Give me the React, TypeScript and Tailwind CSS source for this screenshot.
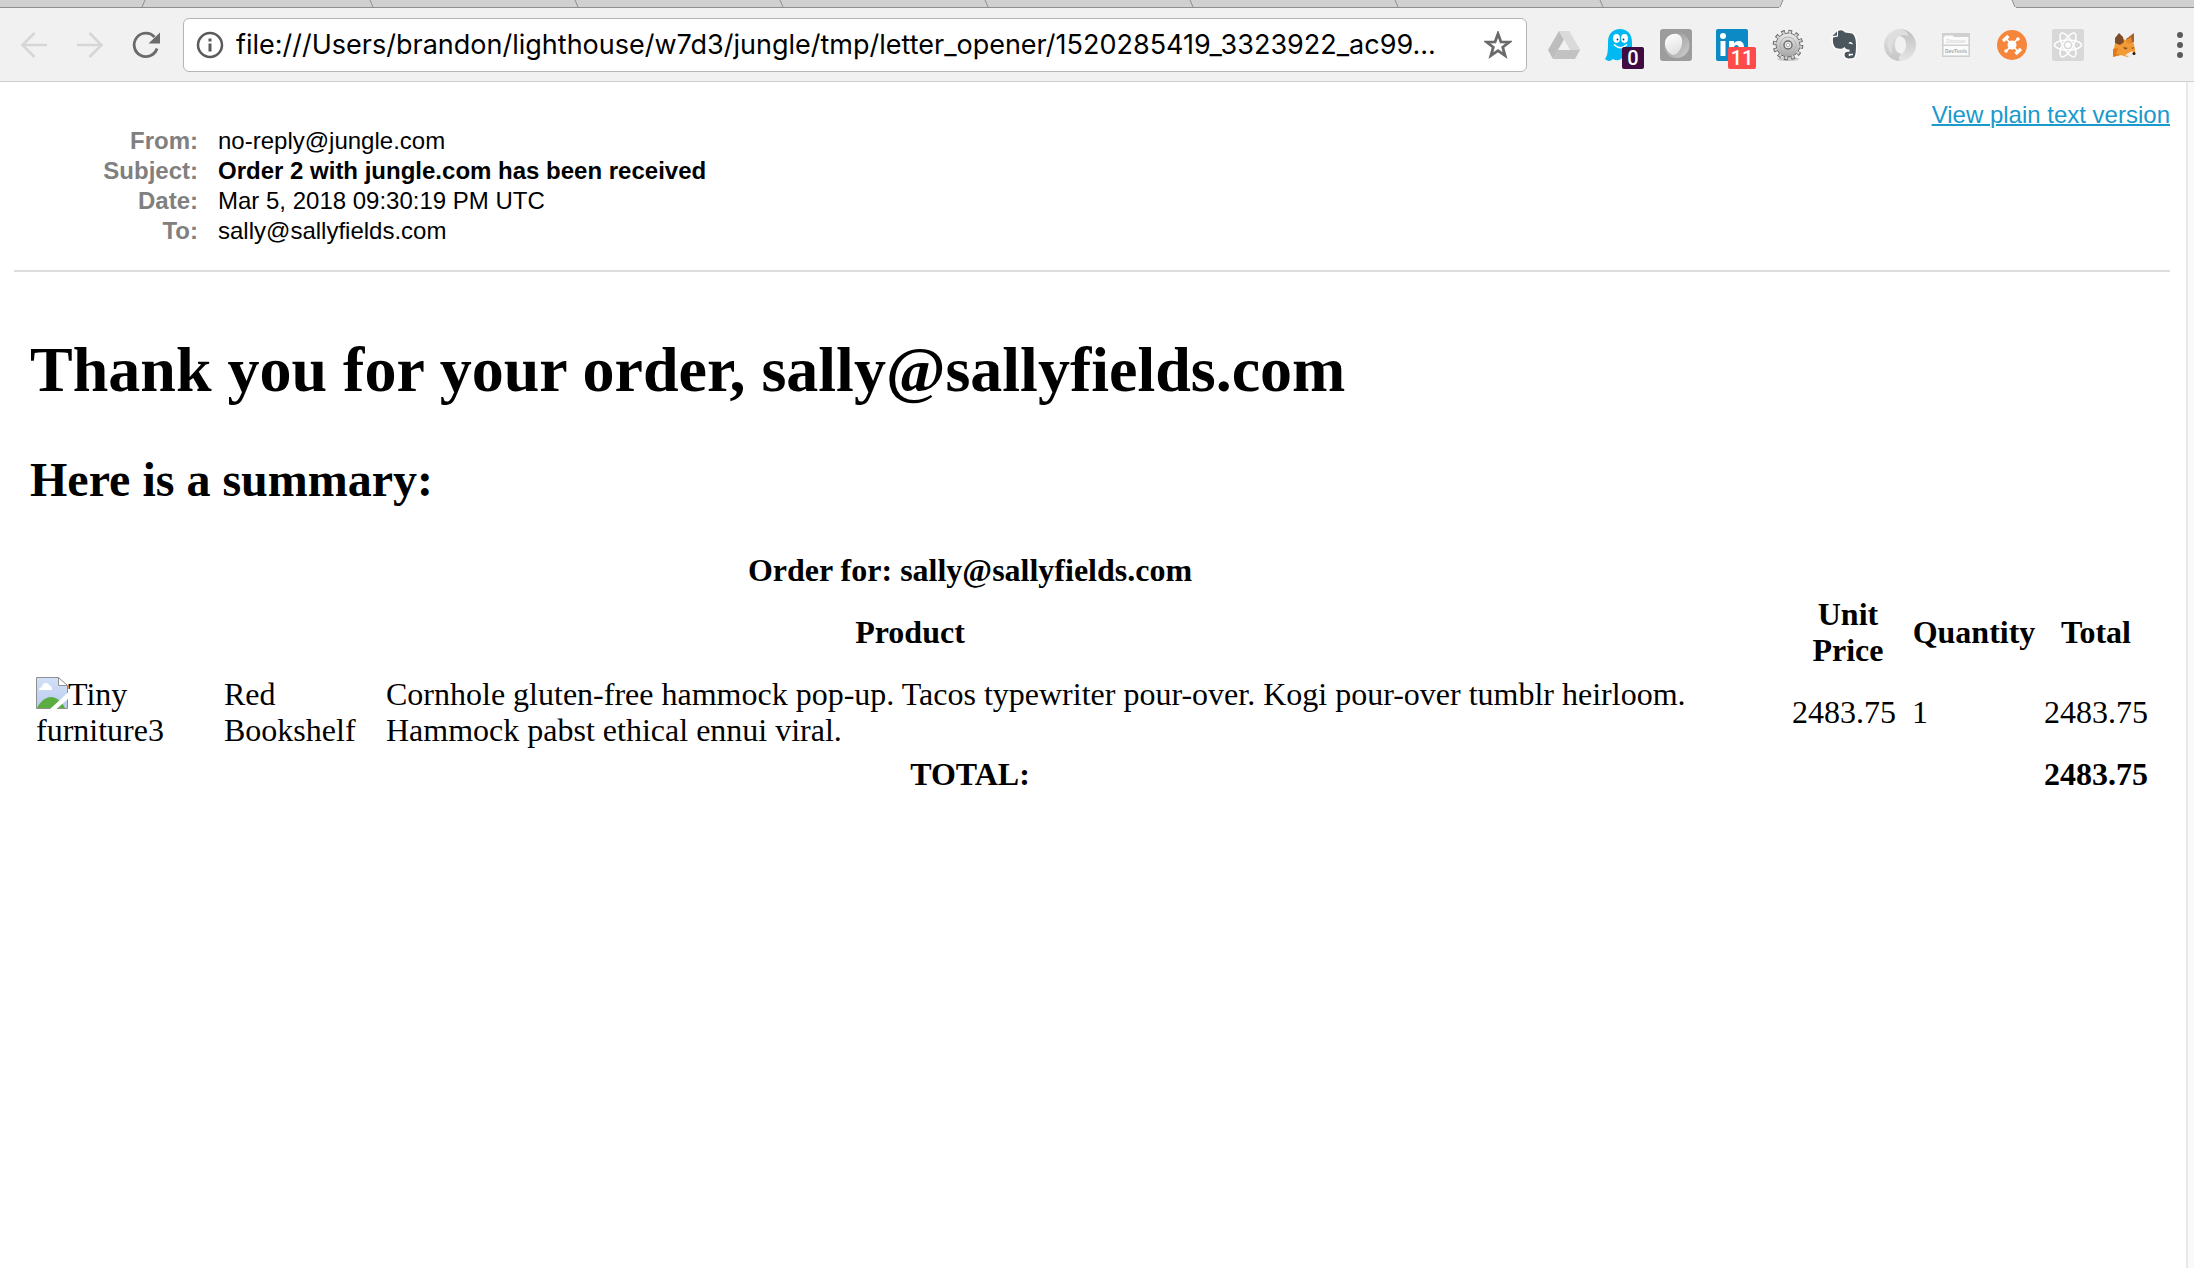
import React from "react";

type Tab = { id: string; width: string; active?: boolean; rise?: boolean };

const tabs: Tab[] = [
  { id: "a", width: "w-[146px]", rise: true },
  { id: "b", width: "w-[228px]" },
  { id: "c", width: "w-[205px]" },
  { id: "d", width: "w-[205px]" },
  { id: "e", width: "w-[205px]" },
  { id: "f", width: "w-[205px]" },
  { id: "g", width: "w-[205px]" },
  { id: "h", width: "w-[205px]" },
  { id: "i", width: "w-[180px]", rise: true },
  { id: "j", width: "w-[232px]", active: true },
];

function TabStrip() {
  return (
    <div className="flex h-2 bg-[#d0d0d0]">
      {tabs.map((t) => (
        <div
          key={t.id}
          className={`flex h-2 shrink-0 justify-end ${t.width} ${
            t.active ? "bg-[#f1f1f1]" : "border-b border-[#8f8f8f]"
          }`}
        >
          <svg width="5" height="8" viewBox="0 0 5 8" className="shrink-0">
            {t.active && <path d="M1 0L5 8V0z" fill="#d0d0d0" />}
            {t.rise && t.id === "i" && <path d="M4 0L0 8H5V0z" fill="#f1f1f1" />}
            <path d={t.rise ? "M4 0L1 7" : "M1 0L4 7"} stroke="#8f8f8f" fill="none" />
          </svg>
        </div>
      ))}
      <div className="h-2 grow border-b border-[#8f8f8f]" />
    </div>
  );
}

function Badge({ text, className }: { text: string; className: string }) {
  return (
    <span
      className={`absolute top-[18px] flex h-[22px] items-center justify-center rounded-[2px] font-[Roboto,sans-serif] text-[20px] font-medium text-white ${className}`}
    >
      {text}
    </span>
  );
}

function DriveIcon() {
  return (
    <svg viewBox="0 0 32 32" className="size-8">
      <path d="M11 2H21L32 21L26 21L16 9z" fill="#cfcfcf" />
      <path d="M11 2L0 21L5 30L16 11z" fill="#bdbdbd" />
      <path d="M11 2H21L32 21H22z" fill="#dadada" />
      <path d="M5 30H27L32 21H10z" fill="#c2c2c2" />
      <path d="M16 11L10 21H22z" fill="#f1f1f1" />
    </svg>
  );
}

function GhostIcon() {
  return (
    <svg viewBox="0 0 32 32" className="size-8">
      <path d="M4 13C4 5 9 0 16 0S28 5 28 13V27C25 31 22 31 19 28C16 32 12 32 9 30C6 33 3 32 1 30C4 26 4 21 4 13z" fill="#00b9f2" />
      <ellipse cx="12.500" cy="9.500" rx="3.400" ry="4.400" fill="#fff" />
      <ellipse cx="20.500" cy="9.500" rx="3.400" ry="4.400" fill="#fff" />
      <circle cx="13.500" cy="10.500" r="0.900" fill="#17344a" />
      <circle cx="19.500" cy="10.500" r="0.900" fill="#17344a" />
      <path d="M10 15.500Q16.500 22 23 15.500" stroke="#fff" strokeWidth="1.600" fill="none" />
    </svg>
  );
}

function LensIcon() {
  return (
    <svg viewBox="0 0 32 32" className="size-8">
      <defs>
        <linearGradient id="lens" x1="0" y1="0" x2="1" y2="1">
          <stop offset="0" stopColor="#8c8c8c" />
          <stop offset="1" stopColor="#cfcfcf" />
        </linearGradient>
        <linearGradient id="blob" x1="0" y1="0" x2="0.300" y2="1">
          <stop offset="0" stopColor="#ffffff" />
          <stop offset="1" stopColor="#e2e2e2" />
        </linearGradient>
      </defs>
      <rect width="32" height="32" rx="3" fill="#9c9c9c" />
      <circle cx="16.500" cy="16" r="13" fill="url(#lens)" />
      <path d="M5 13C6 7 12 4 17 5C21 6 23 10 22 15C21 21 17 26 13 26C8 25 4 18 5 13z" fill="url(#blob)" />
    </svg>
  );
}

function LinkedInIcon() {
  return (
    <svg viewBox="0 0 32 32" className="size-8">
      <rect width="32" height="32" rx="2" fill="#0b8ac6" />
      <circle cx="7" cy="7" r="3" fill="#fff" />
      <path d="M4.500 12H9.500V27H4.500zM13 12H18V14C21 10.500 28 11 28 18V27H23V19C23 15 18 15 18 19V27H13z" fill="#fff" />
    </svg>
  );
}

function GearIcon() {
  return (
    <svg viewBox="0 0 32 32" className="size-8">
      <defs>
        <linearGradient id="gear" x1="0" y1="0" x2="0" y2="1">
          <stop offset="0" stopColor="#ececec" />
          <stop offset="1" stopColor="#a4a4a4" />
        </linearGradient>
      </defs>
      <ellipse cx="16" cy="30" rx="11" ry="2" fill="#c9c9c9" />
      <circle cx="16" cy="16" r="13.300" fill="none" stroke="#666" strokeWidth="4" strokeDasharray="3.600 3.364" />
      <circle cx="16" cy="16" r="12" fill="url(#gear)" stroke="#6c6c6c" />
      <circle cx="16" cy="16" r="12.800" fill="none" stroke="#d2d2d2" strokeWidth="3" strokeDasharray="2.200 4.502" strokeDashoffset="-0.600" />
      <circle cx="16" cy="16" r="8" fill="none" stroke="#b4b4b4" />
      <circle cx="16" cy="16" r="4" fill="#f4f4f4" stroke="#6c6c6c" strokeWidth="1.500" />
      <circle cx="16" cy="16" r="1.800" fill="#fff" stroke="#aaa" />
    </svg>
  );
}

const elephant =
  "M10 2C13 0.500 15 1.500 17 3.500L24 4.500C27 6 28 11 28 16C28 22 27.500 27 26 28.500C23 30 16.500 30 16.500 26C16.500 23 19 22 21.500 23V20.500C19 20.500 17.500 20 16.500 18C14 20.500 11 20 8 19C5.500 17.500 4.500 13 5 8.500L10 7.500z";

function ElephantIcon() {
  return (
    <svg viewBox="0 0 32 32" className="size-8">
      <path d={elephant} fill="#fff" stroke="#fff" strokeWidth="2.600" strokeLinejoin="round" />
      <path d={elephant} fill="#4a565c" />
      <path d="M4.500 7L9 2.500V6.500z" fill="#4a565c" />
      <path d="M20.500 14.500C21 12 24.500 12.500 25 15.500C23.500 14.700 22 14.500 20.500 14.500z" fill="#fff" />
      <path d="M25 25.500H21.500V27" stroke="#fff" strokeWidth="1.500" fill="none" />
    </svg>
  );
}

function RingIcon() {
  return (
    <svg viewBox="0 0 32 32" className="size-8">
      <defs>
        <linearGradient id="ring-dark" x1="0" y1="0" x2="0" y2="1">
          <stop offset="0" stopColor="#bebebe" />
          <stop offset="1" stopColor="#e6e6e6" />
        </linearGradient>
        <linearGradient id="ring-light" x1="0" y1="0" x2="0" y2="1">
          <stop offset="0" stopColor="#e6e6e6" />
          <stop offset="1" stopColor="#c4c4c4" />
        </linearGradient>
      </defs>
      <path d="M16 0A16 16 0 0 1 16 32C12 32 9 29 8 25C16 28 22 24 22 16C22 11 20 8 16 7.500C18 4 18 2 16 0z" fill="url(#ring-dark)" />
      <path d="M16 32A16 16 0 0 1 16 0C20 0 23 3 24 7C17 4 11 8 11 16C11 21 13 24 17 24.500C15 27 14 30 16 32z" fill="url(#ring-light)" />
      <path d="M14 0C19 0 24 3 25 7.500C16 2 6 8 8 25C0 17 3 4 14 0z" fill="#dedede" />
    </svg>
  );
}

function DevToolsIcon() {
  return (
    <svg viewBox="0 0 32 32" className="size-8">
      <rect x="2.800" y="4.800" width="26.400" height="22.400" fill="#fbfbfb" stroke="#d0d0d0" strokeWidth="1.600" />
      <path d="M3 5H29V8H14L12.500 6.500H5L4 8H3zM3 15.500H29V17H3z" fill="#d0d0d0" />
      <text x="16" y="14" textAnchor="middle" fontSize="5" fontFamily="Liberation Sans, sans-serif" fill="#cfcfcf">Discover</text>
      <text x="16" y="23.500" textAnchor="middle" fontSize="5" fontWeight="bold" fontFamily="Liberation Sans, sans-serif" fill="#a8a8a8">DevTools</text>
    </svg>
  );
}

function HubIcon() {
  return (
    <svg viewBox="0 0 32 32" className="size-8">
      <circle cx="16" cy="16" r="15" fill="#f6863b" />
      <path d="M9.500 9L22.500 23M22.500 9L9.500 23" stroke="#fff" strokeWidth="1.800" />
      <circle cx="16" cy="16" r="4.500" fill="#fff" />
      <circle cx="22" cy="10" r="1.800" fill="#fff" />
      <circle cx="10" cy="22" r="1.800" fill="#fff" />
      <path d="M7 12L12.500 7M19.500 25L25 20" stroke="#fff" strokeWidth="3.400" />
    </svg>
  );
}

function AtomIcon() {
  return (
    <svg viewBox="0 0 32 32" className="size-8">
      <rect width="32" height="32" rx="2" fill="#d8d8d8" />
      <g fill="none" stroke="#fff" strokeWidth="1.500">
        <ellipse cx="16" cy="16" rx="13.500" ry="5" />
        <ellipse cx="16" cy="16" rx="13.500" ry="5" transform="rotate(60 16 16)" />
        <ellipse cx="16" cy="16" rx="13.500" ry="5" transform="rotate(120 16 16)" />
      </g>
      <circle cx="16" cy="16" r="2.800" fill="#fff" />
    </svg>
  );
}

function FoxIcon() {
  return (
    <svg viewBox="0 0 32 32" className="size-8">
      <path d="M5 26L7 14L11 9L18 11L25 12L27 20V25L19 28L13 26z" fill="#f29a35" />
      <path d="M5 20L10 19L8 25L13 26L5 28z" fill="#e07a1d" />
      <path d="M7 9L11 4L15 8L16 13L12 16L7 14z" fill="#7c4b28" />
      <path d="M26 4L18 10L20 14L26 13z" fill="#a5622b" />
      <path d="M23 8L18 11L20 15L24 13z" fill="#e88a2c" />
      <path d="M15 18L20 19L17 20.500zM23 19L26 18L25 20z" fill="#7c4b28" />
      <path d="M17 26L24 22L27 25L22 28z" fill="#f3ece4" />
      <circle cx="26" cy="24.500" r="1.500" fill="#1d1d1d" />
    </svg>
  );
}

const extensions: { name: string; icon: React.ReactNode; badge?: React.ReactNode }[] = [
  { name: "Google Drive", icon: <DriveIcon /> },
  { name: "Ghostery", icon: <GhostIcon />, badge: <Badge text="0" className="left-[18px] w-[22px] bg-[#3f0b40]" /> },
  { name: "Lens", icon: <LensIcon /> },
  { name: "LinkedIn", icon: <LinkedInIcon />, badge: <Badge text="11" className="left-3 w-7 bg-[#ff4a4a]" /> },
  { name: "Settings", icon: <GearIcon /> },
  { name: "Evernote", icon: <ElephantIcon /> },
  { name: "JSON viewer", icon: <RingIcon /> },
  { name: "DevTools", icon: <DevToolsIcon /> },
  { name: "Hub", icon: <HubIcon /> },
  { name: "React", icon: <AtomIcon /> },
  { name: "MetaMask", icon: <FoxIcon /> },
];

function Toolbar() {
  return (
    <div className="flex h-[74px] items-center border-b border-[#cfcfcf] bg-[#f1f1f1] pl-[18px]">
      <div className="flex gap-6">
        <button type="button" aria-label="Back" className="size-8">
          <svg viewBox="0 0 32 32" className="size-8" fill="none" stroke="#d6d6d6" strokeWidth="2.600">
            <path d="M29 16H5M16.500 4L4.500 16L16.500 28" />
          </svg>
        </button>
        <button type="button" aria-label="Forward" className="size-8">
          <svg viewBox="0 0 32 32" className="size-8" fill="none" stroke="#d6d6d6" strokeWidth="2.600">
            <path d="M3 16H27M15.500 4L27.500 16L15.500 28" />
          </svg>
        </button>
        <button type="button" aria-label="Reload" className="size-8">
          <svg viewBox="0 0 32 32" className="size-8">
            <path d="M27 19.500A11.700 11.700 0 1 1 24.500 8" fill="none" stroke="#6a6a6a" strokeWidth="2.800" />
            <path d="M30 3.500V14.500H18.500z" fill="#6a6a6a" />
          </svg>
        </button>
      </div>
      <div className="ml-[21px] flex h-[54px] min-w-0 grow items-center rounded-md border border-[#b5b5b5] bg-white pr-3.5 pl-3">
        <svg viewBox="0 0 28 28" className="size-7 shrink-0">
          <circle cx="14" cy="14" r="12" fill="none" stroke="#5a5a5a" strokeWidth="2.500" />
          <path d="M12.500 7.500h3v3h-3zM12.500 12.500h3v8h-3z" fill="#5a5a5a" />
        </svg>
        <input
          type="text"
          readOnly
          aria-label="Address"
          value="file:///Users/brandon/lighthouse/w7d3/jungle/tmp/letter_opener/1520285419_3323922_ac99..."
          className="ml-3 min-w-0 grow bg-transparent font-[Inter,sans-serif] text-[27px] leading-9 text-black outline-none"
        />
        <button type="button" aria-label="Bookmark" className="size-7 shrink-0">
          <svg viewBox="0 0 28 28" className="size-7">
            <path d="M14 2.800L16.900 10.800L25.500 11L18.700 16.200L21.100 24.600L14 19.700L6.900 24.600L9.300 16.200L2.500 11L11.100 10.800z" fill="none" stroke="#6a6a6a" strokeWidth="2.800" />
          </svg>
        </button>
      </div>
      <div className="ml-[21px] flex gap-6">
        {extensions.map((e) => (
          <button key={e.name} type="button" aria-label={e.name} className="relative size-8">
            {e.icon}
            {e.badge}
          </button>
        ))}
        <button type="button" aria-label="Menu" className="h-8 w-[30px]">
          <svg viewBox="0 0 30 32" className="h-8 w-[30px]" fill="#5a5a5a">
            <circle cx="16" cy="6" r="3" />
            <circle cx="16" cy="16" r="3" />
            <circle cx="16" cy="26" r="3" />
          </svg>
        </button>
      </div>
    </div>
  );
}

const headers = [
  { label: "From:", value: "no-reply@jungle.com" },
  { label: "Subject:", value: "Order 2 with jungle.com has been received", bold: true },
  { label: "Date:", value: "Mar 5, 2018 09:30:19 PM UTC" },
  { label: "To:", value: "sally@sallyfields.com" },
];

function MessageHeaders() {
  return (
    <header className="flex items-start justify-between border-b-2 border-[#dddddd] pt-[18px] pb-6 font-['Liberation_Sans',Arial,sans-serif] text-[24px] leading-[30px]">
      <dl className="mt-[26px] grid grid-cols-[184px_auto] gap-x-5">
        {headers.map((h) => (
          <React.Fragment key={h.label}>
            <dt className="text-right font-bold text-[#808080]">{h.label}</dt>
            <dd className={h.bold ? "font-bold" : ""}>{h.value}</dd>
          </React.Fragment>
        ))}
      </dl>
      <a href="#plain" className="text-[#1a99cc] underline decoration-2">
        View plain text version
      </a>
    </header>
  );
}

function BrokenImage() {
  return (
    <svg viewBox="0 0 32 32" className="inline-block size-8 align-[-4px]">
      <defs>
        <linearGradient id="sky" x1="0" y1="0" x2="0" y2="1">
          <stop offset="0" stopColor="#d3e0f8" />
          <stop offset="1" stopColor="#b9cbee" />
        </linearGradient>
      </defs>
      <path d="M0.500 0.500H22L31.500 9V31.500H0.500z" fill="url(#sky)" stroke="#8f8f8f" />
      <path d="M22.500 0.500V8.500H31.500z" fill="#fff" stroke="#8f8f8f" />
      <path d="M3 13C3 11 5 10 6 10C6 5.500 12 4.500 13.500 8.500C15.500 9 16.500 11 16 13z" fill="#fff" />
      <path d="M1 31C4 25 9 20 15 20S26 25 29 31z" fill="#5aad41" />
      <path d="M32 15.500L14 32H20.500L32 22z" fill="#fff" />
    </svg>
  );
}

function OrderTable() {
  return (
    <table className="mt-[38px] w-full table-fixed border-separate border-spacing-1 text-[32px] leading-9">
      <colgroup>
        <col className="w-[184px]" />
        <col className="w-[158px]" />
        <col />
        <col className="w-[116px]" />
        <col className="w-[128px]" />
        <col className="w-[108px]" />
      </colgroup>
      <thead>
        <tr>
          <th colSpan={4} className="p-0.5">Order for: sally@sallyfields.com</th>
        </tr>
        <tr>
          <th colSpan={3} className="p-0.5">Product</th>
          <th className="p-0.5">Unit Price</th>
          <th className="p-0.5">Quantity</th>
          <th className="p-0.5">Total</th>
        </tr>
      </thead>
      <tbody>
        <tr>
          <td className="p-0.5">
            <BrokenImage />
            Tiny furniture3
          </td>
          <td className="p-0.5">Red Bookshelf</td>
          <td className="p-0.5">
            Cornhole gluten-free hammock pop-up. Tacos typewriter pour-over. Kogi pour-over tumblr heirloom. Hammock pabst
            ethical ennui viral.
          </td>
          <td className="p-0.5">2483.75</td>
          <td className="p-0.5">1</td>
          <td className="p-0.5">2483.75</td>
        </tr>
      </tbody>
      <tfoot>
        <tr>
          <th colSpan={4} className="p-0.5">TOTAL:</th>
          <td className="p-0.5" />
          <th className="p-0.5">2483.75</th>
        </tr>
      </tfoot>
    </table>
  );
}

export default function App() {
  return (
    <div className="flex min-h-screen flex-col bg-white text-black">
      <TabStrip />
      <Toolbar />
      <div className="flex grow">
        <main className="grow pr-4 pl-3.5">
          <MessageHeaders />
          <article className="px-4 font-['Liberation_Serif',serif]">
            <h1 className="mt-[62px] text-[64px] leading-[72px] font-bold">Thank you for your order, sally@sallyfields.com</h1>
            <h2 className="mt-[46px] text-[48px] leading-[56px] font-bold">Here is a summary:</h2>
            <OrderTable />
          </article>
        </main>
        <div className="w-2 shrink-0 border-l-2 border-[#e8e8e8] bg-[#fafafa]" />
      </div>
    </div>
  );
}
